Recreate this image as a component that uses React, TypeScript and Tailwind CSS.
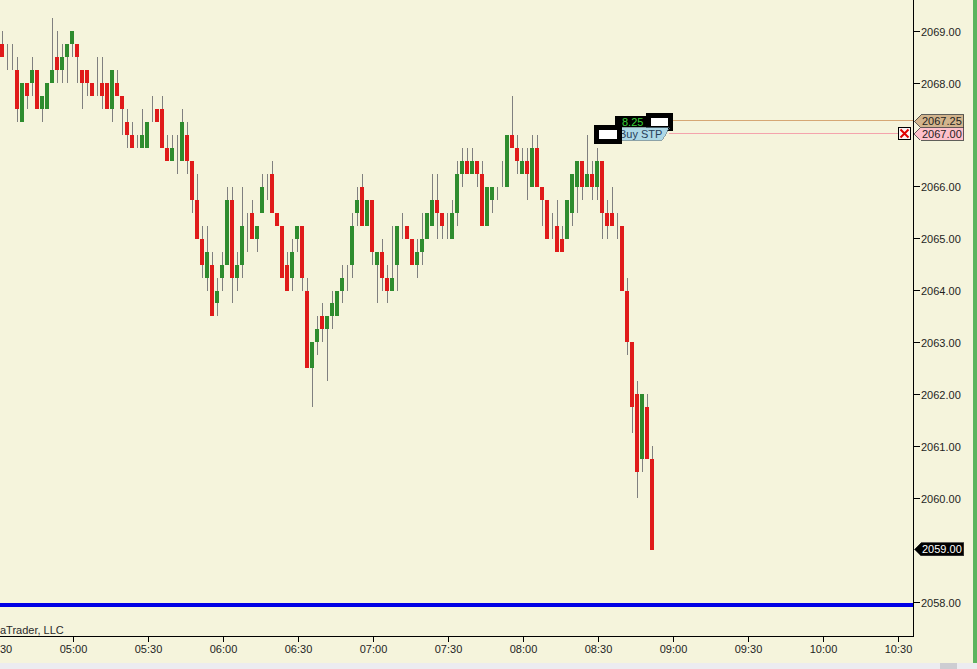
import React from "react";

// [kind, wickTop, bodyTop, bodyBottom, wickBottom] in ticks below 2069.00
type Bar = [string, number, number, number, number];

const bars: Bar[] = [
  ["R", 0, 1, 2, 2], ["D", 1, 2, 2, 3], ["D", 1, 2, 2, 3], ["R", 2, 3, 6, 7], ["G", 4, 4, 7, 7],
  ["R", 4, 4, 5, 6], ["G", 2, 3, 4, 5], ["R", 3, 3, 6, 6], ["G", 5, 5, 6, 7], ["G", 4, 4, 6, 6],
  ["G", -1, 3, 4, 4], ["R", 0, 2, 3, 4], ["G", 1, 2, 3, 4], ["G", 1, 1, 2, 4], ["G", 0, 0, 1, 2],
  ["R", 1, 1, 2, 4], ["R", 3, 3, 4, 6], ["R", 3, 3, 4, 5], ["R", 4, 4, 5, 5], ["D", 2, 4, 4, 5],
  ["R", 2, 4, 5, 6], ["R", 4, 4, 6, 6], ["G", 3, 3, 6, 7], ["R", 3, 4, 5, 5], ["R", 5, 5, 6, 8],
  ["R", 6, 7, 8, 9], ["R", 7, 8, 9, 9], ["D", 8, 9, 9, 9], ["G", 6, 8, 9, 9], ["G", 7, 7, 9, 9],
  ["D", 5, 6, 6, 7], ["R", 6, 6, 7, 7], ["R", 5, 6, 9, 9], ["R", 8, 9, 10, 10], ["G", 8, 9, 10, 10],
  ["D", 8, 10, 10, 11], ["G", 6, 7, 10, 10], ["R", 7, 8, 10, 11], ["R", 10, 10, 13, 14], ["R", 11, 13, 16, 16],
  ["R", 15, 16, 18, 19], ["G", 15, 17, 19, 20], ["R", 17, 18, 22, 22], ["G", 19, 20, 21, 22], ["G", 17, 18, 19, 20],
  ["G", 12, 13, 18, 18], ["R", 12, 13, 19, 21], ["G", 17, 18, 19, 20], ["G", 12, 15, 18, 19], ["D", 14, 16, 16, 17],
  ["R", 13, 14, 16, 16], ["G", 15, 15, 16, 17], ["G", 11, 12, 14, 14], ["D", 11, 12, 12, 13], ["R", 10, 11, 14, 14],
  ["R", 14, 14, 15, 15], ["R", 15, 15, 19, 19], ["R", 17, 18, 20, 20], ["G", 16, 17, 19, 20], ["G", 15, 15, 16, 17],
  ["R", 15, 15, 19, 20], ["R", 19, 20, 26, 26], ["G", 24, 24, 26, 29], ["G", 22, 23, 24, 25], ["R", 21, 22, 23, 24],
  ["G", 22, 22, 23, 27], ["G", 20, 21, 22, 23], ["G", 20, 20, 22, 22], ["G", 18, 19, 20, 21], ["D", 18, 19, 19, 20],
  ["G", 14, 15, 18, 19], ["G", 12, 13, 14, 15], ["R", 11, 12, 15, 15], ["G", 13, 13, 15, 15], ["R", 13, 13, 17, 18],
  ["G", 17, 17, 18, 21], ["R", 16, 17, 19, 20], ["R", 18, 19, 20, 21], ["G", 15, 19, 20, 20], ["G", 15, 15, 18, 20],
  ["D", 14, 15, 15, 16], ["R", 15, 15, 16, 16], ["R", 16, 16, 18, 18], ["G", 16, 17, 18, 19], ["G", 14, 16, 17, 18],
  ["G", 14, 14, 16, 16], ["G", 11, 13, 15, 15], ["R", 11, 13, 14, 16], ["R", 14, 14, 15, 16], ["D", 14, 15, 15, 16],
  ["G", 13, 14, 16, 16], ["G", 10, 11, 14, 15], ["G", 9, 10, 11, 12], ["R", 9, 10, 11, 11], ["G", 9, 10, 11, 11],
  ["R", 10, 10, 11, 12], ["R", 10, 11, 15, 15], ["G", 12, 12, 15, 15], ["G", 12, 12, 13, 14], ["D", 12, 12, 12, 13],
  ["D", 10, 11, 11, 12], ["G", 8, 8, 12, 12], ["R", 5, 8, 9, 9], ["R", 8, 9, 10, 11], ["G", 9, 10, 11, 11],
  ["R", 9, 10, 11, 13], ["G", 8, 9, 12, 12], ["R", 8, 9, 12, 12], ["R", 12, 12, 13, 15], ["R", 13, 13, 16, 16],
  ["D", 14, 15, 15, 16], ["R", 13, 15, 17, 17], ["R", 15, 16, 17, 17], ["G", 13, 13, 16, 16], ["G", 11, 11, 14, 15],
  ["G", 10, 10, 12, 14], ["R", 10, 10, 12, 13], ["G", 8, 11, 12, 12], ["R", 10, 11, 12, 13], ["G", 9, 10, 12, 13],
  ["R", 10, 10, 14, 16], ["R", 13, 14, 15, 16], ["R", 12, 14, 15, 15], ["D", 14, 15, 15, 16], ["R", 15, 15, 20, 20],
  ["R", 19, 20, 24, 25], ["R", 24, 24, 29, 31], ["R", 27, 28, 34, 36], ["G", 28, 28, 33, 34], ["R", 28, 29, 33, 33],
  ["R", 32, 33, 40, 40],
];

const Y = (t: number) => 31 + t * 12.975;

const priceLabels = [
  { p: "2069.00", y: 31 },
  { p: "2068.00", y: 83 },
  { p: "2066.00", y: 186 },
  { p: "2065.00", y: 238 },
  { p: "2064.00", y: 290 },
  { p: "2063.00", y: 342 },
  { p: "2062.00", y: 394 },
  { p: "2061.00", y: 446 },
  { p: "2060.00", y: 498 },
  { p: "2058.00", y: 602 },
];

const times = ["05:00", "05:30", "06:00", "06:30", "07:00", "07:30", "08:00", "08:30", "09:00", "09:30", "10:00", "10:30"];

function Marker({ y, label, fill, text }: { y: number; label: string; fill: string; text: string }) {
  return (
    <g>
      <polygon
        points={`914,${y} 920.5,${y - 6.5} 963.5,${y - 6.5} 963.5,${y + 6.5} 920.5,${y + 6.5}`}
        fill={fill}
        stroke="#3a3a3a"
        strokeWidth={0.8}
      />
      <text x={922} y={y + 4} fontSize={11} fill={text}>
        {label}
      </text>
    </g>
  );
}

function Chart() {
  return (
    <svg width={973} height={663} className="block shrink-0" shapeRendering="crispEdges">
      {/* stop line */}
      <rect x={0} y={603} width={913} height={4} fill="#0000e6" />

      {/* order lines */}
      <rect x={673} y={120} width={241} height={1} fill="#d6a774" />
      <rect x={669} y={133} width={229} height={1} fill="#f4a3ac" />

      {bars.map(([k, wt, bt, bb, wb], n) => {
        const cx = 3 + 5 * n;
        return (
          <g key={n}>
            <rect x={cx - 1} y={Y(wt)} width={1} height={Math.max(1, Y(wb) - Y(wt))} fill="#808080" />
            {k !== "D" && (
              <rect
                x={cx - 3}
                y={Y(bt)}
                width={4}
                height={Y(bb) - Y(bt)}
                fill={k === "R" ? "#e01a1a" : "#2e8c2e"}
              />
            )}
          </g>
        );
      })}

      {/* order labels */}
      <rect x={615} y={116} width={32} height={11} fill="#000" />
      <text x={622} y={125.5} fontSize={11} fill="#3ad23a" shapeRendering="auto">
        8.25
      </text>
      <rect x={646} y={113} width={27} height={18} fill="#000" />
      <rect x={651} y={118} width={17} height={8} fill="#fff" />

      <polygon points="620,127.5 669,127.5 662,140 620,140" fill="#add8e6" stroke="#5f7f90" strokeWidth={0.7} />
      <text x={619} y={138} fontSize={11} fill="#27405a">
        Buy STP
      </text>
      <rect x={594} y={125} width={28} height={19} fill="#000" />
      <rect x={599} y={130} width={18} height={9} fill="#fff" />

      {/* cancel box */}
      <rect x={898.5} y={127.5} width={12} height={12} fill="#fbf3f3" stroke="#000" strokeWidth={1} />
      <path d="M900.5 129.5 L908.5 137.5 M908.5 129.5 L900.5 137.5" stroke="#e00000" strokeWidth={2} shapeRendering="auto" />

      {/* axes */}
      <rect x={913} y={0} width={1} height={637} fill="#000" />
      <rect x={0} y={636} width={914} height={1} fill="#000" />

      {priceLabels.map((l) => (
        <g key={l.p}>
          <rect x={914} y={l.y} width={6} height={1} fill="#000" />
          <text x={921} y={l.y + 4.5} fontSize={11} fill="#1e1e1e">
            {l.p}
          </text>
        </g>
      ))}

      <Marker y={121} label="2067.25" fill="#d2b48c" text="#1e1e1e" />
      <Marker y={133.5} label="2067.00" fill="#ffc0cb" text="#1e1e1e" />
      <Marker y={549} label="2059.00" fill="#000" text="#fff" />

      {/* 04:30 label is clipped by the left edge, only its minutes show */}
      <text x={0} y={653} fontSize={11} fill="#1e1e1e">
        30
      </text>
      {times.map((t, i) => {
        const x = Math.round(72.7 + 75 * i);
        return (
          <g key={t}>
            <rect x={x} y={637} width={1} height={5} fill="#000" />
            <text x={x + 0.5} y={653} fontSize={11} fill="#1e1e1e" textAnchor="middle">
              {t}
            </text>
          </g>
        );
      })}

      <text x={0} y={634} fontSize={11} fill="#2a2a2a">
        aTrader, LLC
      </text>
    </svg>
  );
}

export default function App() {
  return (
    <div className="w-[977px] h-[669px] overflow-hidden flex flex-col bg-[#f5f4dc] font-['Liberation_Sans',Arial,sans-serif]">
      <div className="flex h-[663px]">
        <Chart />
        <div className="w-[4px] bg-[#5cb45e]" />
      </div>
      <div className="flex h-[6px] bg-[#ececf0]">
        <div className="ml-[940px] w-[17px] bg-[#cdcdd2]" />
      </div>
    </div>
  );
}
